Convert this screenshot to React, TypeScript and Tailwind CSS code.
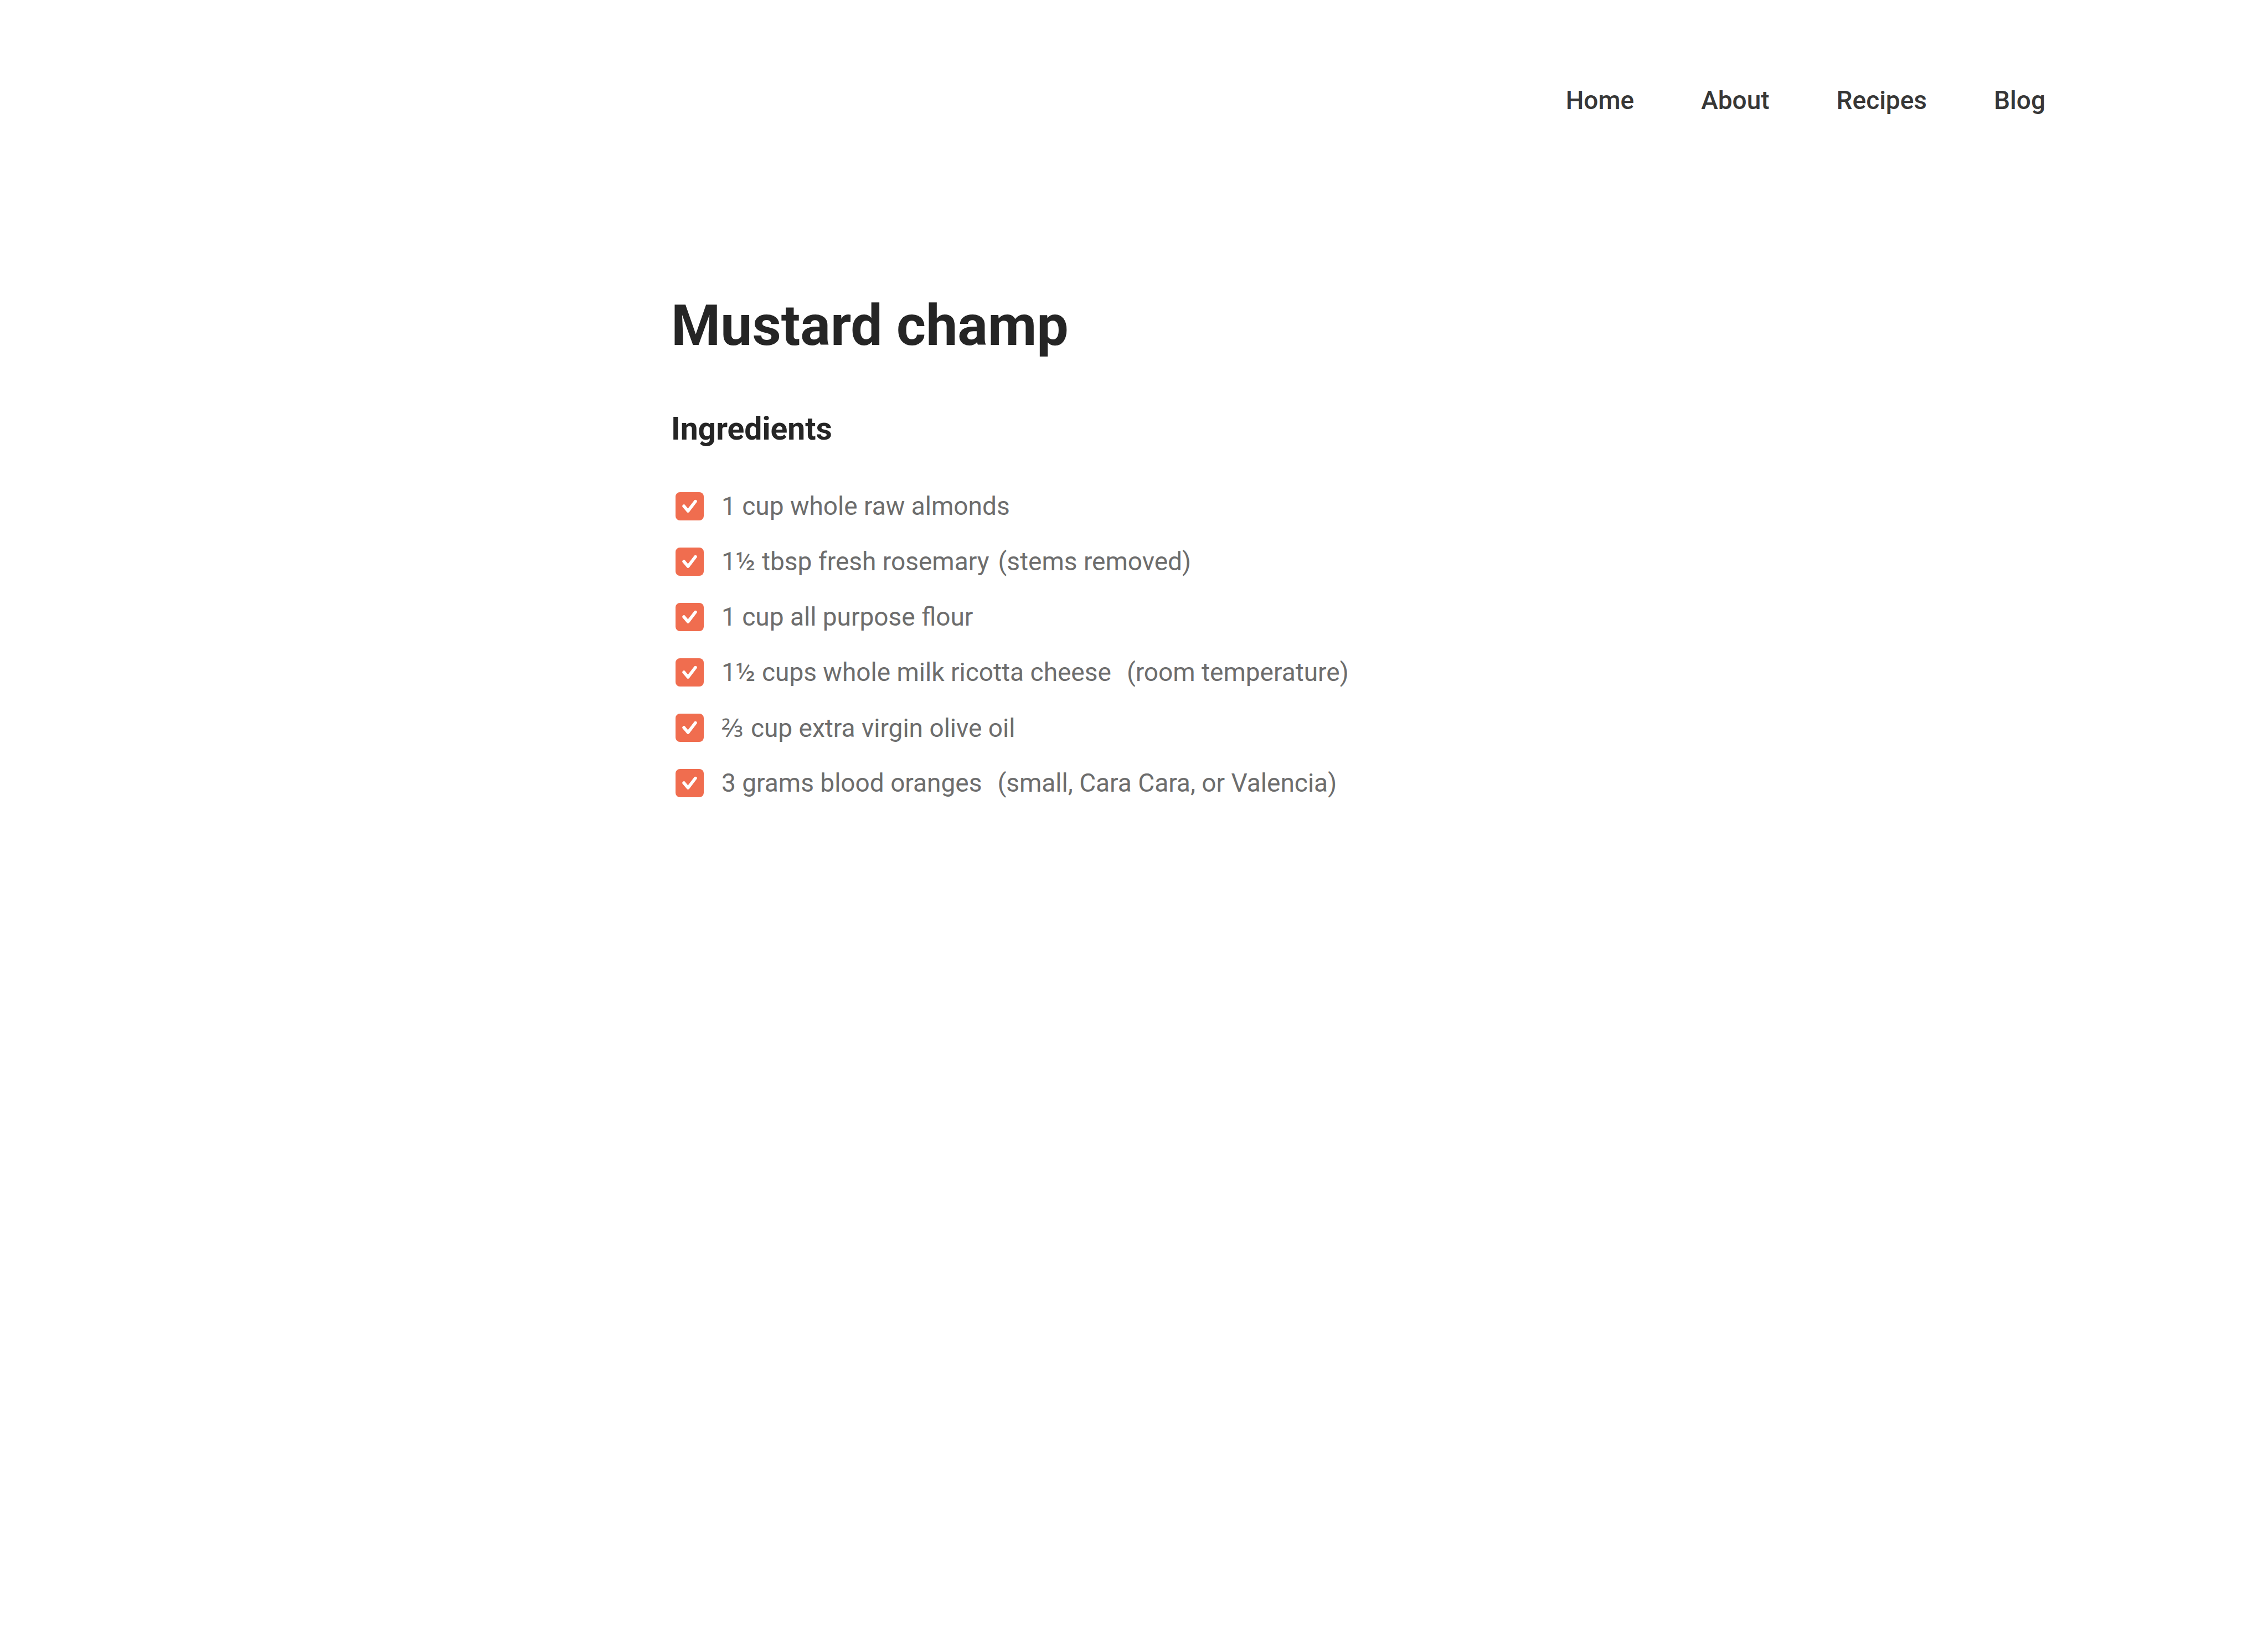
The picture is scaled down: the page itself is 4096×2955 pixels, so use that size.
import React from "react";

const links = ["Home", "About", "Recipes", "Blog"];

const ingredients = [
  { name: "1 cup whole raw almonds" },
  { name: "1½ tbsp fresh rosemary", note: "(stems removed)", gap: "ml-4" },
  { name: "1 cup all purpose flour" },
  { name: "1½ cups whole milk ricotta cheese", note: "(room temperature)", gap: "ml-7" },
  { fraction: "⅔", name: " cup extra virgin olive oil" },
  { name: "3 grams blood oranges", note: "(small, Cara Cara, or Valencia)", gap: "ml-7" },
];

export default function App() {
  return (
    <div className="min-h-screen bg-white font-['Roboto',sans-serif]">
      <header className="flex justify-end pt-[144px] pr-[402px]">
        <nav className="flex gap-[121px]">
          {links.map((label) => (
            <a key={label} href="#" className="text-[46px] leading-[74px] font-medium text-[#373737]">
              {label}
            </a>
          ))}
        </nav>
      </header>
      <main className="mt-[302px] ml-[1212px]">
        <h1 className="text-[102px] leading-[136px] font-bold text-[#252525]">Mustard champ</h1>
        <h2 className="mt-[80px] text-[57px] leading-[78px] font-bold text-[#252525]">Ingredients</h2>
        <ul className="mt-[63px] ml-2 flex flex-col gap-[25px]">
          {ingredients.map(({ fraction, name, note, gap }) => (
            <li key={name}>
              <label className="flex h-[75px] items-center text-[46px] leading-[75px] text-[#6d6d6d]">
                <span className="mr-8 grid size-[51px]">
                  <input
                    type="checkbox"
                    defaultChecked
                    className="peer col-start-1 row-start-1 size-[51px] appearance-none rounded-[8px] border-4 border-[#f06d4f] checked:bg-[#f06d4f]"
                  />
                  <svg
                    viewBox="0 0 54 54"
                    fill="none"
                    className="pointer-events-none invisible col-start-1 row-start-1 size-[51px] peer-checked:visible"
                  >
                    <path
                      d="M16 26.6L23.9 36L38 17.6"
                      stroke="white"
                      strokeWidth="6"
                      strokeLinecap="round"
                      strokeLinejoin="round"
                    />
                  </svg>
                </span>
                <span>
                  {fraction && <span className="font-['Noto_Sans',sans-serif]">{fraction}</span>}
                  {name}
                </span>
                {note && <span className={gap}>{note}</span>}
              </label>
            </li>
          ))}
        </ul>
      </main>
    </div>
  );
}
